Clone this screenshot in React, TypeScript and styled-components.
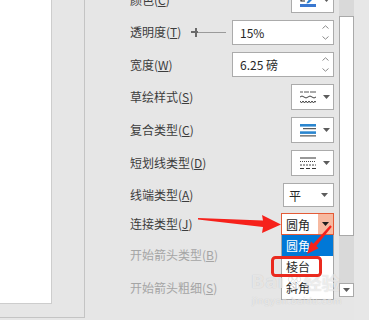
import React from "react";
import styled, { createGlobalStyle } from "styled-components";

const Global = createGlobalStyle`
  html, body { margin: 0; padding: 0; background: #e6e6e6; }
  body { font-family: "Noto Sans CJK SC", "Noto Sans", sans-serif; }
`;

const Screen = styled.div`
  position: relative;
  width: 369px;
  height: 320px;
  overflow: hidden;
  display: flex;
  align-items: flex-start;
  background: #e6e6e6;
  font-family: "Noto Sans CJK SC", "Noto Sans", sans-serif;
  font-size: 12px;
`;

const LeftBox = styled.div`
  flex-shrink: 0;
  width: 84px;
  height: 317px;
  border-right: 1px solid #c4c4c4;
  border-bottom: 1px solid #c4c4c4;
`;

const WhiteSheet = styled.div`
  width: 51px;
  height: 303px;
  background: #ffffff;
  border-right: 1px solid #cdcdcd;
  border-bottom: 1px solid #cdcdcd;
`;

const FormPane = styled.div`
  flex-shrink: 0;
  width: 254px;
  box-sizing: border-box;
  padding: 0 5px 0 45px;
  display: flex;
  flex-direction: column;
  margin-top: -16px;
`;

const Row = styled.div<{ $h: number }>`
  height: ${(p) => p.$h}px;
  display: flex;
  align-items: center;
  justify-content: space-between;
`;

const Label = styled.span<{ $disabled?: boolean }>`
  color: ${(p) => (p.$disabled ? "#a5a5a5" : "#3c3c3c")};
  font-size: 12px;
  line-height: 16px;
  white-space: nowrap;
  u { text-decoration: underline; text-underline-offset: 1px; }
`;

const Controls = styled.div`
  display: flex;
  align-items: center;
`;

const IconButton = styled.div`
  width: 43px;
  height: 26px;
  box-sizing: border-box;
  border: 1px solid #ababab;
  background: #ffffff;
  display: flex;
  align-items: center;
  padding-left: 8px;
  gap: 7px;
`;

const SpinBox = styled.div`
  width: 102px;
  height: 25px;
  box-sizing: border-box;
  border: 1px solid #ababab;
  background: #ffffff;
  display: flex;
  align-items: center;
  justify-content: space-between;
  padding: 0 4px 0 7px;
  color: #262626;
  font-size: 12px;
`;

const SpinArrows = styled.div`
  display: flex;
  flex-direction: column;
  gap: 7px;
`;

const Slider = styled.div`
  position: relative;
  width: 35px;
  height: 9px;
  margin-right: 6px;
  display: flex;
  align-items: center;
`;

const SliderTrack = styled.div`
  flex: 1;
  height: 1px;
  background: #9a9a9a;
`;

const SliderThumb = styled.div`
  position: absolute;
  left: 4px;
  top: 0;
  width: 2px;
  height: 9px;
  background: #6a6a6a;
  &::before {
    content: "";
    position: absolute;
    left: -4px;
    top: 3.5px;
    width: 7px;
    height: 2px;
    background: #6a6a6a;
  }
`;

const ComboWrap = styled.div`
  position: relative;
`;

const Combo = styled.div<{ $open?: boolean; $w: number }>`
  width: ${(p) => p.$w}px;
  height: ${(p) => (p.$open ? 22 : 24)}px;
  box-sizing: border-box;
  border: 1px solid ${(p) => (p.$open ? "#e45b37" : "#ababab")};
  background: #ffffff;
  display: flex;
  align-items: stretch;
  color: #262626;
  font-size: 12px;
`;

const ComboText = styled.span<{ $pad: number }>`
  flex: 1;
  display: flex;
  align-items: center;
  padding-left: ${(p) => p.$pad}px;
`;

const ComboArrow = styled.span<{ $open?: boolean }>`
  width: 15px;
  display: flex;
  align-items: center;
  justify-content: center;
  background: ${(p) => (p.$open ? "#f7b9a0" : "transparent")};
  padding-right: ${(p) => (p.$open ? 0 : 1)}px;
`;

const DropList = styled.div`
  position: absolute;
  left: 0;
  top: 100%;
  width: 53px;
  box-sizing: border-box;
  border: 1px solid #a6a6a6;
  border-top: none;
  background: #ffffff;
  padding: 0 0 1px 0;
  z-index: 2;
`;

const DropItem = styled.div<{ $sel?: boolean }>`
  height: 21px;
  display: flex;
  align-items: center;
  padding-left: 4px;
  font-size: 12px;
  background: ${(p) => (p.$sel ? "#0078d7" : "#ffffff")};
  color: ${(p) => (p.$sel ? "#ffffff" : "#262626")};
`;

const ScrollCol = styled.div`
  flex-shrink: 0;
  width: 15px;
  height: 297px;
  display: flex;
  flex-direction: column;
  background: #d9d9d9;
`;

const ScrollGap = styled.div<{ $h: number }>`
  height: ${(p) => p.$h}px;
`;

const ScrollThumb = styled.div`
  height: 220px;
  box-sizing: border-box;
  border: 1px solid #a9a9a9;
  background: #ffffff;
`;

const ScrollButton = styled.div`
  height: 14px;
  box-sizing: border-box;
  border: 1px solid #a9a9a9;
  background: #ffffff;
  display: flex;
  align-items: center;
  justify-content: center;
`;

const RightStrip = styled.div`
  flex: 1;
  align-self: stretch;
  background: #e7e7e7;
`;

const Overlay = styled.svg`
  position: absolute;
  left: 0;
  top: 0;
  width: 369px;
  height: 320px;
  pointer-events: none;
  z-index: 5;
`;

const Watermark = styled.div`
  position: absolute;
  left: 251px;
  top: 271px;
  z-index: 4;
  pointer-events: none;
  display: flex;
  flex-direction: column;
  color: rgba(255, 255, 255, 0.62);
  text-shadow: 0 0 1px rgba(90, 90, 90, 0.3);
`;

const WmMain = styled.div`
  display: flex;
  align-items: center;
  gap: 1px;
  font-family: "DejaVu Sans", "Noto Sans CJK SC", sans-serif;
  font-weight: bold;
  font-size: 18px;
  line-height: 22px;
  letter-spacing: 0.5px;
`;

const WmCjk = styled.span`
  font-family: "Noto Sans CJK SC", sans-serif;
  font-size: 18px;
  font-weight: bold;
  letter-spacing: 0;
`;

const WmUrl = styled.div`
  font-family: "DejaVu Sans", sans-serif;
  font-size: 9px;
  line-height: 10px;
  letter-spacing: 0.4px;
  margin-top: 3px;
  padding-left: 1px;
`;

const Tri = () => (
  <svg width="7" height="4" viewBox="0 0 7 4">
    <polygon points="0,0 7,0 3.5,4" fill="#5c5c5c" />
  </svg>
);

const DarkTri = () => (
  <svg width="7" height="4" viewBox="0 0 7 4">
    <polygon points="0,0 7,0 3.5,4" fill="#1e1e1e" />
  </svg>
);

const ChevUp = () => (
  <svg width="7" height="4" viewBox="0 0 7 4">
    <polyline points="0.5,3.5 3.5,0.8 6.5,3.5" fill="none" stroke="#8a8a8a" strokeWidth="1" />
  </svg>
);
const ChevDown = () => (
  <svg width="7" height="4" viewBox="0 0 7 4">
    <polyline points="0.5,0.5 3.5,3.2 6.5,0.5" fill="none" stroke="#8a8a8a" strokeWidth="1" />
  </svg>
);

const ColorIcon = () => (
  <svg width="16" height="16" viewBox="0 0 16 16">
    <path d="M1 1 V9 H5" fill="none" stroke="#222" strokeWidth="1.2" />
    <path d="M7 10 L13 3 L15 5 L9 11 L6.5 11.5 Z" fill="#2a7fd4" />
    <rect x="0" y="12" width="16" height="3" fill="#3a78d0" />
  </svg>
);

const SketchIcon = () => (
  <svg width="16" height="14" viewBox="0 0 16 14">
    <path d="M0 2 H3 M4 2 H9 M10 2 H16" stroke="#555" strokeWidth="1" />
    <path d="M0 7 Q2 5 4 7 T8 7 T12 7 T16 7" fill="none" stroke="#444" strokeWidth="1" />
    <path d="M0 11 L1.5 13 L3 11 L4.5 13 L6 11 L7.5 13 L9 11 L10.5 13 L12 11 L13.5 13 L15 11 L16 12.5" fill="none" stroke="#444" strokeWidth="1" />
  </svg>
);

const CompoundIcon = () => (
  <svg width="16" height="13" viewBox="0 0 16 13">
    <rect x="0" y="0" width="16" height="2.6" fill="#2b86cf" />
    <rect x="3" y="4.2" width="13" height="1" fill="#333" />
    <rect x="0" y="7.3" width="16" height="2.6" fill="#2b86cf" />
    <rect x="0" y="11.4" width="16" height="1" fill="#333" />
  </svg>
);

const DashIcon = () => (
  <svg width="16" height="13" viewBox="0 0 16 13">
    <rect x="0" y="0.5" width="16" height="1" fill="#333" />
    <path d="M0 4.5 H16" stroke="#444" strokeWidth="1" strokeDasharray="1 1" />
    <path d="M0 8 H16" stroke="#444" strokeWidth="1" strokeDasharray="2 1" />
    <path d="M0 11.5 H16" stroke="#333" strokeWidth="1" strokeDasharray="4 2" />
  </svg>
);

export default function App() {
  return (
    <>
      <Global />
      <Screen>
        <LeftBox>
          <WhiteSheet />
        </LeftBox>

        <FormPane>
          <Row $h={32}>
            <Label>颜色(<u>C</u>)</Label>
            <IconButton>
              <ColorIcon />
              <Tri />
            </IconButton>
          </Row>
          <Row $h={32.5}>
            <Label>透明度(<u>T</u>)</Label>
            <Controls>
              <Slider>
                <SliderTrack />
                <SliderThumb />
              </Slider>
              <SpinBox>
                <span>15%</span>
                <SpinArrows>
                  <ChevUp />
                  <ChevDown />
                </SpinArrows>
              </SpinBox>
            </Controls>
          </Row>
          <Row $h={32.5}>
            <Label>宽度(<u>W</u>)</Label>
            <SpinBox>
              <span>6.25 磅</span>
              <SpinArrows>
                <ChevUp />
                <ChevDown />
              </SpinArrows>
            </SpinBox>
          </Row>
          <Row $h={32.5}>
            <Label>草绘样式(<u>S</u>)</Label>
            <IconButton>
              <SketchIcon />
              <Tri />
            </IconButton>
          </Row>
          <Row $h={33}>
            <Label>复合类型(<u>C</u>)</Label>
            <IconButton>
              <CompoundIcon />
              <Tri />
            </IconButton>
          </Row>
          <Row $h={33}>
            <Label>短划线类型(<u>D</u>)</Label>
            <IconButton>
              <DashIcon />
              <Tri />
            </IconButton>
          </Row>
          <Row $h={31}>
            <Label>线端类型(<u>A</u>)</Label>
            <Combo $w={51}>
              <ComboText $pad={5}>平</ComboText>
              <ComboArrow>
                <Tri />
              </ComboArrow>
            </Combo>
          </Row>
          <Row $h={27}>
            <Label>连接类型(<u>J</u>)</Label>
            <ComboWrap>
              <Combo $w={53} $open>
                <ComboText $pad={4}>圆角</ComboText>
                <ComboArrow $open>
                  <DarkTri />
                </ComboArrow>
              </Combo>
              <DropList>
                <DropItem $sel>圆角</DropItem>
                <DropItem>棱台</DropItem>
                <DropItem>斜角</DropItem>
              </DropList>
            </ComboWrap>
          </Row>
          <Row $h={35}>
            <Label $disabled>开始箭头类型(<u>B</u>)</Label>
          </Row>
          <Row $h={31}>
            <Label $disabled>开始箭头粗细(<u>S</u>)</Label>
          </Row>
        </FormPane>

        <ScrollCol>
          <ScrollGap $h={16} />
          <ScrollThumb />
          <ScrollGap $h={47} />
          <ScrollButton>
            <Tri />
          </ScrollButton>
        </ScrollCol>
        <RightStrip />

        <Watermark>
          <WmMain>
            <span>Bai</span>
            <svg width="17" height="17" viewBox="0 0 16 16">
              <g fill="rgba(255,255,255,0.7)" stroke="rgba(90,90,90,0.3)" strokeWidth="0.5">
                <ellipse cx="4" cy="5" rx="1.8" ry="2.4" />
                <ellipse cx="8" cy="3.5" rx="1.8" ry="2.4" />
                <ellipse cx="12" cy="5" rx="1.8" ry="2.4" />
                <path d="M8 7.5 C5 7.5 3 11 4 13 C5 15 11 15 12 13 C13 11 11 7.5 8 7.5 Z" />
              </g>
            </svg>
            <WmCjk>经验</WmCjk>
          </WmMain>
          <WmUrl>jingyan.baidu.com</WmUrl>
        </Watermark>

        <Overlay viewBox="0 0 369 320">
          <polygon
            points="198,218 263,220.5 262,215 281,224.5 262,233 263,227 198,219.6"
            fill="#f6211b"
          />
          <polygon
            points="331.8,226.7 316.2,246.1 318.6,248.2 307,254 311,241.6 313.4,243.7 330.2,225.3"
            fill="#f6211b"
          />
          <rect
            x="272.5"
            y="257.5"
            width="48"
            height="18"
            rx="3"
            fill="none"
            stroke="#ea2a1f"
            strokeWidth="3"
          />
        </Overlay>
      </Screen>
    </>
  );
}
